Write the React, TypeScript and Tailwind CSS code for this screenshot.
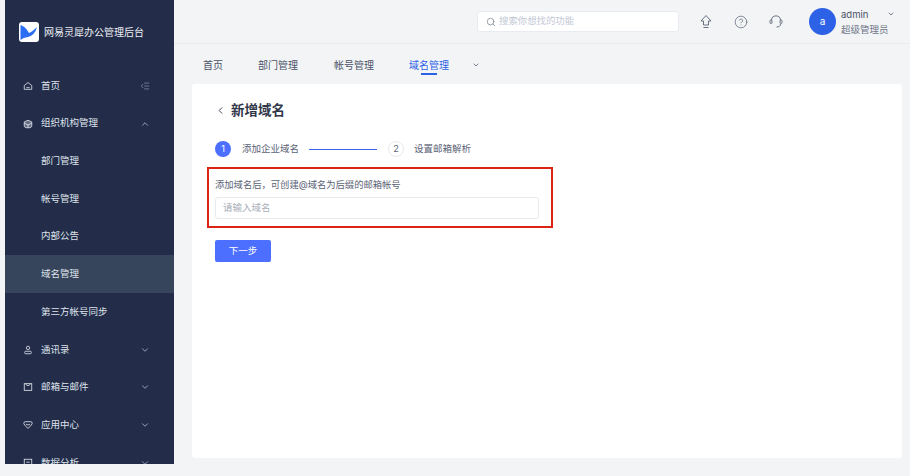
import { ChevronDown, ChevronLeft, ChevronUp, CircleHelp, Search, IndentDecrease } from 'lucide-react';

const font = "font-['Inter','Noto_Sans_CJK_SC',sans-serif]";

function NavIcon({ children }: { children: React.ReactNode }) {
  return (
    <svg width="10" height="10" viewBox="0 0 12 12" fill="none" stroke="currentColor" strokeWidth="1">
      {children}
    </svg>
  );
}

function NavItem({ icon, label, chevron }: { icon: React.ReactNode; label: string; chevron: 'up' | 'down' | 'fold' }) {
  return (
    <div className="flex h-[37.7px] shrink-0 items-center pl-[18px] pr-[24px] text-[9.5px] text-[#dfe3ea]">
      <span className="flex w-[18px] shrink-0 items-center">{icon}</span>
      <span className="flex-1">{label}</span>
      {chevron === 'up' && <ChevronUp size={10} strokeWidth={1.5} />}
      {chevron === 'down' && <ChevronDown size={10} strokeWidth={1.5} />}
      {chevron === 'fold' && <IndentDecrease size={10} strokeWidth={1} />}
    </div>
  );
}

function SubItem({ label, active }: { label: string; active?: boolean }) {
  return (
    <div className={`flex h-[37.7px] shrink-0 items-center pl-[36px] text-[9.5px] text-[#dfe3ea] ${active ? 'bg-[#36445c]' : ''}`}>
      {label}
    </div>
  );
}

function Sidebar() {
  return (
    <aside className="flex h-[464px] w-[169px] shrink-0 flex-col overflow-hidden bg-[#232d4a]">
      <div className="flex h-[67px] shrink-0 items-start pl-[14px] pt-[22px]">
        <svg width="20" height="20" viewBox="0 0 20 20" className="shrink-0">
          <rect width="20" height="20" rx="3" fill="#fff" />
          <path d="M1.5 3 Q6 4 10 11 Q13 10 18 5 Q16 13 9 15 Q4 15.5 1.5 18 Z" fill="#2a6cf2" />
        </svg>
        <span className="ml-[5px] mt-[3px] text-[10px] leading-[15px] text-[#eef0f4]">网易灵犀办公管理后台</span>
      </div>
      <NavItem
        icon={<NavIcon><path d="M1.5 5.5 L6 1.8 L10.5 5.5 V10 H1.5 Z" /><path d="M4 8 H8" /></NavIcon>}
        label="首页"
        chevron="fold"
      />
      <NavItem
        icon={<NavIcon><path d="M6 1.5 L10.5 3.5 V9 L8.5 10.5 H3.5 L1.5 9 V3.5 Z" fill="currentColor" fillOpacity="0.35" /><path d="M1.5 5 L6 7 L10.5 5 M6 7 V10.5" /></NavIcon>}
        label="组织机构管理"
        chevron="up"
      />
      <SubItem label="部门管理" />
      <SubItem label="帐号管理" />
      <SubItem label="内部公告" />
      <SubItem label="域名管理" active />
      <SubItem label="第三方帐号同步" />
      <NavItem
        icon={<NavIcon><circle cx="6" cy="3.5" r="2" /><rect x="2" y="7.5" width="8" height="3" rx="1.2" /></NavIcon>}
        label="通讯录"
        chevron="down"
      />
      <NavItem
        icon={<NavIcon><rect x="1.5" y="2" width="9" height="8" /><path d="M3.5 2 V3 Q6 6 8.5 3 V2" /></NavIcon>}
        label="邮箱与邮件"
        chevron="down"
      />
      <NavItem
        icon={<NavIcon><path d="M3 2 H9 Q11.5 2 11 4.5 Q9 8 6 10 Q3 8 1 4.5 Q0.5 2 3 2 Z" /><path d="M3.5 5 Q6 7 8.5 5" /></NavIcon>}
        label="应用中心"
        chevron="down"
      />
      <NavItem
        icon={<NavIcon><rect x="1.5" y="1.5" width="9" height="9" /><path d="M1.5 8 H10.5 M4 5 H8" /></NavIcon>}
        label="数据分析"
        chevron="down"
      />
    </aside>
  );
}

function TopBar() {
  return (
    <header className="flex h-[44px] shrink-0 items-center border-b border-[#e9ecef] pl-[303px]">
      <div className="flex h-[21px] w-[202px] items-center gap-[3px] rounded-[3px] border border-[#e8ebf0] bg-white pl-[8px] text-[9.4px] text-[#c2c8d4]">
        <Search size={10} className="text-[#8a909c]" />
        搜索你想找的功能
      </div>
      <svg width="14" height="15" viewBox="0 0 14 15" fill="none" stroke="currentColor" strokeWidth="0.9" className="ml-[20px] text-[#5a6275]">
        <path d="M7 1.5 L12 7 H9.5 V11 H4.5 V7 H2 Z" strokeLinejoin="round" />
        <path d="M4.5 13.5 H9.5" />
      </svg>
      <CircleHelp size={14} strokeWidth={1.2} className="ml-[21px] text-[#5a6275]" />
      <svg width="14" height="15" viewBox="0 0 14 15" fill="none" stroke="currentColor" strokeWidth="0.9" className="ml-[21px] text-[#5a6275]">
        <path d="M2.5 6 C2.5 0.5 11.5 0.5 11.5 6" />
        <rect x="1" y="6" width="2" height="3.5" rx="1" />
        <rect x="11" y="6" width="2" height="3.5" rx="1" />
        <path d="M11.5 10 C11.5 12.5 9.5 13 7.5 13" />
      </svg>
      <div className="ml-[26px] flex h-[27px] w-[27px] items-center justify-center rounded-full bg-[#2d62e6] text-[10px] text-white">a</div>
      <div className="ml-[5px] w-[54px] whitespace-nowrap text-[9.5px] leading-[15px]">
        <div className="flex items-center justify-between text-[#4a5268]">
          admin
          <ChevronDown size={8} strokeWidth={2} className="text-[#3a4256]" />
        </div>
        <div className="text-[#6f7687]">超级管理员</div>
      </div>
    </header>
  );
}

function Tabs() {
  return (
    <nav className="flex h-[40px] shrink-0 items-center pl-[29px] pt-[2px] text-[10px] text-[#4a5268]">
      <span className="w-[55px]">首页</span>
      <span className="w-[76px]">部门管理</span>
      <span className="w-[75px]">帐号管理</span>
      <span className="relative w-[63px] text-[#2d62e6]">
        域名管理
        <span className="absolute left-[12px] top-[15px] h-[2px] w-[16px] bg-[#2d62e6]" />
      </span>
      <ChevronDown size={8} strokeWidth={2} className="text-[#3a4256]" />
    </nav>
  );
}

function Steps() {
  return (
    <div className="mt-[21px] flex items-center text-[9.5px] text-[#5a6275]">
      <span className="flex h-[16px] w-[16px] items-center justify-center rounded-full bg-[#4c6fff] text-[9px] text-white">1</span>
      <span className="ml-[11px]">添加企业域名</span>
      <span className="ml-[10px] h-px w-[68px] bg-[#3f62f0]" />
      <span className="ml-[11px] flex h-[16px] w-[16px] items-center justify-center rounded-full border border-[#e8ebf0] text-[9px]">2</span>
      <span className="ml-[10px]">设置邮箱解析</span>
    </div>
  );
}

function Card() {
  return (
    <section className="h-[374px] w-[710px] rounded-[3px] bg-white pl-[23px] pt-[16px]">
      <div className="flex items-center text-[13.5px] font-semibold leading-[20px] text-[#2f3648]">
        <ChevronLeft size={11} strokeWidth={2} className="mr-[5px] text-[#2f3648]" />
        新增域名
      </div>
      <Steps />
      <div className="-ml-[8px] mt-[10px] h-[61px] w-[346px] border-[2px] border-[#dc2415] pl-[6px] pt-[9px]">
        <div className="text-[9.3px] leading-[14px] text-[#5a6275]">添加域名后，可创建@域名为后缀的邮箱帐号</div>
        <div className="mt-[5px] flex h-[22px] w-[324px] items-center rounded-[3px] border border-[#e8ebf0] pl-[7px] text-[9.5px] text-[#a9aeb8]">
          请输入域名
        </div>
      </div>
      <button className="mt-[12px] flex h-[22px] w-[56px] items-center justify-center rounded-[2px] bg-[#4c6fff] text-[9.5px] text-white">
        下一步
      </button>
    </section>
  );
}

export default function App() {
  return (
    <div className={`${font} flex h-[476px] w-[910px] items-start overflow-hidden bg-[#f2f4f6] pl-[5px]`}>
      <Sidebar />
      <main className="flex min-w-0 flex-1 flex-col">
        <TopBar />
        <Tabs />
        <div className="pl-[18px]">
          <Card />
        </div>
      </main>
    </div>
  );
}
